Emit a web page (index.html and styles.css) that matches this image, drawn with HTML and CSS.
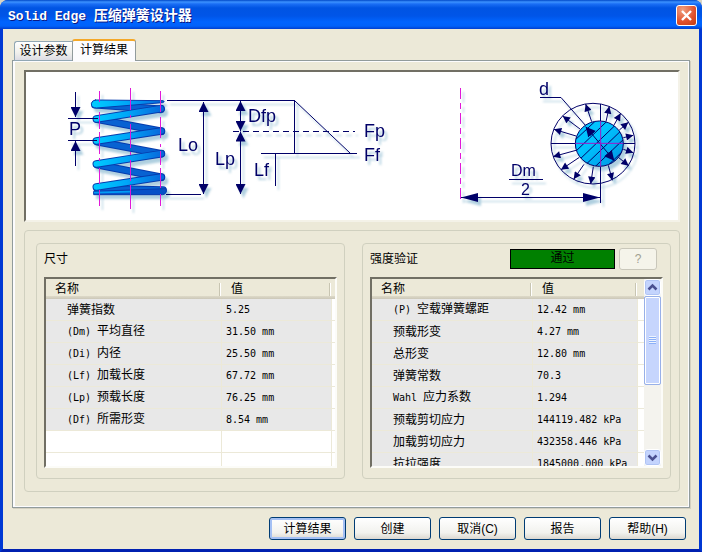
FILE: index.html
```html
<!DOCTYPE html>
<html lang="zh-CN">
<head>
<meta charset="utf-8">
<title>Solid Edge 压缩弹簧设计器</title>
<link rel="stylesheet" href="styles.css">
</head>
<body>
<div class="window">
  <header class="titlebar">
    <h1 class="title"><span class="title-latin">Solid Edge </span>压缩弹簧设计器</h1>
    <button class="close" type="button" aria-label="关闭">
      <svg viewBox="0 0 21 21" width="21" height="21"><path d="M6 6l9 9M15 6l-9 9" stroke="#fff" stroke-width="2.4" fill="none"/></svg>
    </button>
  </header>
  <main class="client">
    <div class="tabs" role="tablist">
      <button class="tab" type="button" role="tab" aria-selected="false">设计参数</button>
      <button class="tab tab-active" type="button" role="tab" aria-selected="true">计算结果</button>
    </div>
    <section class="page" role="tabpanel">
      <div class="picture">
        <svg class="diagram" viewBox="26 72 652 148" height="148" preserveAspectRatio="xMinYMin meet">
          <defs>
            <filter id="shade" filterUnits="userSpaceOnUse" x="26" y="72" width="652" height="148" color-interpolation-filters="sRGB">
              <feDropShadow dx="3" dy="4" stdDeviation="1" flood-color="#5f9fc0" flood-opacity=".5"/>
            </filter>
            <linearGradient id="coil" gradientUnits="userSpaceOnUse" x1="100" y1="0" x2="320" y2="0">
              <stop offset="0" stop-color="#00ccff"/><stop offset=".45" stop-color="#00a8f8"/><stop offset="1" stop-color="#0860d8"/>
            </linearGradient>
            <linearGradient id="wire" x1="0" y1="0" x2="1" y2="1">
              <stop offset=".4" stop-color="#00c4ff"/><stop offset="1" stop-color="#0090e0"/>
            </linearGradient>
            <marker id="head" viewBox="0 0 10 10" refX="10" refY="5" markerWidth="11" markerHeight="10" markerUnits="userSpaceOnUse" orient="auto-start-reverse"><path d="M0 0L10 5L0 10z" fill="#000068"/></marker>
            <marker id="load" viewBox="0 0 10 10" refX="10" refY="5" markerWidth="25" markerHeight="22" markerUnits="userSpaceOnUse" orient="auto"><path d="M0 0L10 5L0 10z" fill="#000068"/></marker>
            <marker id="span" viewBox="0 0 10 10" refX="10" refY="5" markerWidth="17" markerHeight="9" markerUnits="userSpaceOnUse" orient="auto-start-reverse" preserveAspectRatio="none"><path d="M0 0L10 5L0 10z" fill="#000068"/></marker>
            <marker id="dia" viewBox="0 0 10 10" refX="10" refY="5" markerWidth="30" markerHeight="32" markerUnits="userSpaceOnUse" orient="auto-start-reverse"><path d="M0 0L10 5L0 10z" fill="#000068"/></marker>
            <clipPath id="core"><ellipse cx="478" cy="221" rx="72" ry="68"/></clipPath>
          </defs>
          <g filter="url(#shade)">
            <g transform="translate(60 70) scale(.33333)" stroke-linecap="round" fill="none">
              <g stroke="#063cae" stroke-width="23">
                <path d="M105 104L303 118M112 148L304 184M112 215L304 251M112 284L304 322"/>
                <path d="M112 356L309 360"/>
              </g>
              <g stroke="#0862d2" stroke-width="17">
                <path d="M105 104L303 118M112 148L304 184M112 215L304 251M112 284L304 322"/>
                <path d="M112 356L309 360"/>
              </g>
              <path d="M102 364L318 356Q322 372 308 374L102 374z" fill="#0650c8" stroke="#063cae" stroke-width="3"/>
              <path d="M104 368L210 365" stroke="#009cf4" stroke-width="5"/>
              <g stroke="#063cae" stroke-width="23"><path d="M109 147L303 116M109 213L304 183M109 282L304 251M109 351L304 321"/></g>
              <g stroke="url(#coil)" stroke-width="17"><path d="M109 147L303 116M109 213L304 183M109 282L304 251M109 351L304 321"/></g>
              <path d="M106 90L310 92Q316 95 308 98L110 114Q94 114 94 101Q96 91 106 90z" fill="url(#coil)" stroke="#063cae" stroke-width="3"/>
            </g>
            <g stroke="#e018d8" fill="none">
              <path d="M99.500 91V102M99.500 112V129M99.500 132V154M99.500 158V161M99.500 168V184M99.500 190V206"/>
              <path d="M130.500 88V110M130.500 115V118M130.500 124V148M130.500 152V155M130.500 160V181M130.500 185V209"/>
              <path d="M160.500 91V112M160.500 117V138M160.500 144V147M160.500 151V165M160.500 168V188M160.500 194V206"/>
            </g>
            <g stroke="#000068" fill="none">
              <path d="M68 118.500H98M68 140.500H97M167 100.500H295M166 194.500H201"/>
              <path d="M75.500 92V117" marker-end="url(#head)"/><path d="M75.500 166V141" marker-end="url(#head)"/>
              <path d="M203.500 102V194" marker-start="url(#head)" marker-end="url(#head)"/>
              <path d="M240.500 101V131" marker-start="url(#head)" marker-end="url(#head)"/>
              <path d="M240.500 131.500V194" marker-start="url(#head)" marker-end="url(#head)"/>
              <path d="M233 131.500H355" stroke-dasharray="6 4"/>
              <path d="M294.500 101V153.500M261 153.500H357M275.500 154V186M295 101L350 153"/>
            </g>
            <g class="diagram-text">
              <text x="69" y="135">P</text><text x="178" y="151">Lo</text><text x="248" y="122">Dfp</text>
              <text x="215" y="165">Lp</text><text x="254" y="176">Lf</text><text x="364" y="137">Fp</text><text x="364" y="161">Ff</text>
              <text x="539" y="95">d</text>
            </g>
            <g class="diagram-text diagram-fraction">
              <text x="511" y="176">Dm</text><text x="521" y="195">2</text>
            </g>
            <path d="M460.500 88V203" stroke="#e018d8" stroke-dasharray="11 4 6 4" fill="none"/>
            <g stroke="#000068" fill="none">
              <path d="M461 197.500H600" marker-start="url(#span)" marker-end="url(#span)"/>
              <path d="M509 179.500H543M540 97.500H561L586 126"/>
              <path d="M600.500 104V203M551 143.500H635"/>
            </g>
            <g transform="translate(440 70) scale(.33333)" fill="none" stroke="#000068" stroke-width="3">
              <ellipse cx="459" cy="221" rx="126" ry="121"/>
              <ellipse cx="478" cy="221" rx="72" ry="68" fill="url(#wire)"/>
              <path clip-path="url(#core)" d="M400 215L475 145M400 251L510 145M410 277L542 150M430 291L560 166M457 298L560 199M490 300L560 232"/>
              <g class="load-arrows">
                <path d="M455 155L437 102"/><path d="M420 177L368 138"/><path d="M408 198L342 178"/>
                <path d="M408 241L339 260"/><path d="M418 262L363 299"/><path d="M432 283L401 328"/>
                <path d="M460 290L452 342"/><path d="M505 286L517 331"/><path d="M535 262L566 287"/>
                <path d="M550 238L580 248"/><path d="M550 203L580 196"/><path d="M538 180L565 157"/>
                <path d="M522 165L542 130"/><path d="M498 155L508 109"/>
              </g>
              <path d="M437 170L523 272" marker-start="url(#dia)" marker-end="url(#dia)"/>
              <path d="M482 153V290M406 220H550" stroke="#a018c8"/>
            </g>
          </g>
        </svg>
      </div>
      <div class="results">
        <section class="group">
          <div class="group-head"><h2 class="group-title">尺寸</h2></div>
          <div class="list">
            <div class="list-view">
              <table class="grid grid-size">
                <colgroup><col class="col-name"><col class="col-value"><col></colgroup>
                <thead><tr><th scope="col">名称</th><th scope="col">值</th><td></td></tr></thead>
                <tbody>
                  <tr><td>弹簧指数</td><td class="num">5.25</td><td></td></tr>
                  <tr><td><span class="latin">(Dm) </span>平均直径</td><td class="num">31.50 mm</td><td></td></tr>
                  <tr><td><span class="latin">(Di) </span>内径</td><td class="num">25.50 mm</td><td></td></tr>
                  <tr><td><span class="latin">(Lf) </span>加载长度</td><td class="num">67.72 mm</td><td></td></tr>
                  <tr><td><span class="latin">(Lp) </span>预载长度</td><td class="num">76.25 mm</td><td></td></tr>
                  <tr><td><span class="latin">(Df) </span>所需形变</td><td class="num">8.54 mm</td><td></td></tr>
                  <tr class="empty"><td></td><td></td><td></td></tr>
                  <tr class="empty"><td></td><td></td><td></td></tr>
                </tbody>
              </table>
            </div>
          </div>
        </section>
        <section class="group">
          <div class="group-head">
            <h2 class="group-title">强度验证</h2>
            <output class="status">通过</output>
            <button class="hint" type="button" disabled>?</button>
          </div>
          <div class="list">
            <div class="list-view">
              <table class="grid grid-strength">
                <colgroup><col class="col-name"><col class="col-value"><col></colgroup>
                <thead><tr><th scope="col">名称</th><th scope="col">值</th><td></td></tr></thead>
                <tbody>
                  <tr><td><span class="latin">(P) </span>空载弹簧螺距</td><td class="num">12.42 mm</td><td></td></tr>
                  <tr><td>预载形变</td><td class="num">4.27 mm</td><td></td></tr>
                  <tr><td>总形变</td><td class="num">12.80 mm</td><td></td></tr>
                  <tr><td>弹簧常数</td><td class="num">70.3</td><td></td></tr>
                  <tr><td><span class="latin">Wahl </span>应力系数</td><td class="num">1.294</td><td></td></tr>
                  <tr><td>预载剪切应力</td><td class="num">144119.482 kPa</td><td></td></tr>
                  <tr><td>加载剪切应力</td><td class="num">432358.446 kPa</td><td></td></tr>
                  <tr><td>抗拉强度</td><td class="num">1845000.000 kPa</td><td></td></tr>
                </tbody>
              </table>
            </div>
            <div class="scrollbar">
              <button class="arrow" type="button" aria-label="向上滚动"><svg viewBox="0 0 15 15" width="15" height="15"><path d="M3.500 9.500L7.500 5.500L11.500 9.500" fill="none" stroke="#4a5090" stroke-width="2.500"/></svg></button>
              <div class="track"><div class="thumb"><span class="grip"></span></div></div>
              <button class="arrow" type="button" aria-label="向下滚动"><svg viewBox="0 0 15 15" width="15" height="15"><path d="M3.500 5.500L7.500 9.500L11.500 5.500" fill="none" stroke="#4a5090" stroke-width="2.500"/></svg></button>
            </div>
          </div>
        </section>
      </div>
    </section>
    <footer class="actions">
      <button class="action action-default" type="button">计算结果</button>
      <button class="action" type="button">创建</button>
      <button class="action" type="button">取消(C)</button>
      <button class="action" type="button">报告</button>
      <button class="action" type="button">帮助(H)</button>
    </footer>
  </main>
</div>
</body>
</html>
```

FILE: styles.css
```css
* { box-sizing: border-box; }

body {
  margin: 0;
  background: #d8d4c4;
  color: #000;
  font: 12px/16px "Liberation Sans", "Noto Sans CJK SC", sans-serif;
}

button {
  margin: 0;
  padding: 0;
  color: inherit;
  font: inherit;
}

h1, h2 { margin: 0; font: inherit; }

.window {
  display: flex;
  flex-direction: column;
  height: 100vh;
  min-height: 480px;
  overflow: hidden;
  border-radius: 8px 8px 0 0;
  background: #0042dc;
}

.titlebar {
  display: flex;
  align-items: center;
  justify-content: space-between;
  flex: none;
  height: 29px;
  padding: 2px 5px 0 8px;
  background: linear-gradient(#0048c8 0, #3c92ff 2px, #1a6ef5 4px, #0054e3 8px, #0055e8 16px, #0064ff 22px, #0062fa 26px, #003fd0 29px);
}

.title {
  color: #fff;
  font-size: 14px;
  font-weight: bold;
  line-height: 20px;
  text-shadow: 1px 1px #0a1883;
  white-space: pre;
}

.title-latin { font-family: "Liberation Mono", monospace; font-size: 13px; }

.close {
  width: 21px;
  height: 21px;
  border: 1px solid #fff;
  border-radius: 3px;
  background: radial-gradient(circle at 30% 20%, #f0a080, #e0502c 60%, #c03c14);
}

.close svg { display: block; margin: -1px; }

.client {
  display: flex;
  flex: 1;
  flex-direction: column;
  min-height: 0;
  padding: 10px 9px 9px;
  border: solid #0038d4;
  border-width: 0 3px 3px;
  border-bottom-color: #0020b0;
  background: #ece9d8;
}

.tabs {
  position: relative;
  display: flex;
  align-items: flex-end;
  margin: 0 0 -1px 2px;
}

.tab {
  width: 58px;
  height: 20px;
  border: 1px solid #91a7b4;
  border-right: 0;
  border-radius: 3px 0 0 0;
  background: linear-gradient(#fff, #f0f0ec 60%, #dcdce4);
}

.tab-active {
  width: 64px;
  height: 22px;
  padding-bottom: 3px;
  border: 1px solid #919b9c;
  border-top: 2px solid #f4a828;
  border-bottom: 0;
  border-radius: 3px 3px 0 0;
  background: #fcfcfe;
}

.page {
  display: flex;
  flex: 1;
  flex-direction: column;
  gap: 8px;
  min-height: 0;
  padding: 9px 9px 15px 11px;
  border: 1px solid #919b9c;
  background: #ece9d8;
  box-shadow: inset 2px 1px #fcfcfe, inset -1px -1px #fcfcfe, 1px 1px #d4d0c0;
}

.picture {
  flex: none;
  overflow: hidden;
  border: 2px solid;
  border-color: #716f64 #f4f2e8 #f4f2e8 #716f64;
  background: #fff;
}

.diagram { display: block; }

.diagram-text {
  fill: #000068;
  font-family: "Liberation Sans", sans-serif;
  font-size: 18px;
}

.diagram-fraction { font-size: 16px; }

.load-arrows path { marker-end: url(#load); }

.results {
  display: flex;
  flex: 1;
  gap: 17px;
  min-height: 0;
  padding: 12px 8px 12px 11px;
  border: 1px solid #d0d0bf;
  border-radius: 4px;
}

.group {
  display: flex;
  flex: 1;
  flex-direction: column;
  gap: 7px;
  min-width: 0;
  padding: 4px 7px 10px;
  border: 1px solid #d0d0bf;
  border-radius: 4px;
}

.group-head {
  display: flex;
  align-items: center;
  gap: 4px;
  flex: none;
  height: 22px;
  padding-right: 6px;
}

.group-title { flex: 1; }

.status {
  width: 105px;
  height: 20px;
  border: 1px solid #000;
  background: #008000;
  line-height: 17px;
  text-align: center;
}

.hint {
  width: 38px;
  height: 22px;
  border: 1px solid #c9c7ba;
  border-radius: 3px;
  background: #f5f4ea;
  color: #a1a192;
}

.list {
  display: flex;
  flex: 1;
  min-height: 0;
  border: 2px solid;
  border-color: #716f64 #fcfcf8 #fcfcf8 #716f64;
  background: #fff;
}

.list-view { flex: 1; min-width: 0; overflow: hidden; }

.grid {
  width: 100%;
  border-collapse: separate;
  border-spacing: 0;
  table-layout: fixed;
}

.grid-size .col-name { width: 176px; }
.grid-size .col-value { width: 110px; }
.grid-strength .col-name { width: 161px; }
.grid-strength .col-value { width: 105px; }

.grid th, .grid td {
  overflow: hidden;
  padding: 0;
  text-align: left;
  white-space: pre;
}

.grid thead th, .grid thead td {
  height: 20px;
  background: linear-gradient(#ece9d8 17px, #dedac8 17px, #cbc7b8);
}

.grid thead th {
  padding-left: 9px;
  background:
    linear-gradient(#c8c5b2, #c8c5b2) right 2px top 4px / 1px 13px no-repeat,
    linear-gradient(#fff, #fff) right 1px top 4px / 1px 13px no-repeat,
    linear-gradient(#ece9d8 17px, #dedac8 17px, #cbc7b8);
  font-weight: normal;
}

.grid tbody td {
  height: 22px;
  border: solid #ece9d8;
  border-width: 0 1px 1px 0;
  background: #e8e8e8;
}

.grid tbody td:first-child { padding-left: 21px; }
.grid tbody td:last-child, .grid .empty td { border-right-width: 0; background: #fff; }
.grid .empty td:not(:last-child) { border-right-width: 1px; }
.grid .num { padding-left: 4px; }
.num, .latin { font-family: "DejaVu Sans Mono", monospace; font-size: 10px; }

.scrollbar {
  display: flex;
  flex: none;
  flex-direction: column;
  width: 17px;
  background: #f4f3ee;
}

.arrow {
  flex: none;
  height: 17px;
  border: 1px solid #fff;
  border-radius: 3px;
  background: #c4d4fd;
  box-shadow: inset 0 0 0 1px #b0c4f4;
}

.arrow svg { display: block; }
.track { flex: 1; }

.thumb {
  display: flex;
  align-items: center;
  justify-content: center;
  height: 58%;
  border: 1px solid #98b0e8;
  border-radius: 2px;
  background: #c6d5fd;
  box-shadow: inset 0 0 0 1px #fff;
}

.grip {
  width: 7px;
  height: 8px;
  background: repeating-linear-gradient(#eef4fe 0 1px, #8cb0f8 1px 2px);
}

.actions {
  display: flex;
  flex: none;
  justify-content: flex-end;
  gap: 8px;
  margin-top: 9px;
  padding-right: 4px;
}

.action {
  width: 77px;
  height: 23px;
  border: 1px solid #003c74;
  border-radius: 3px;
  background: linear-gradient(#fff, #f2f2ee 70%, #dcd8d0);
}

.action-default { box-shadow: inset 0 0 0 2px #a4c0f4; }
```
